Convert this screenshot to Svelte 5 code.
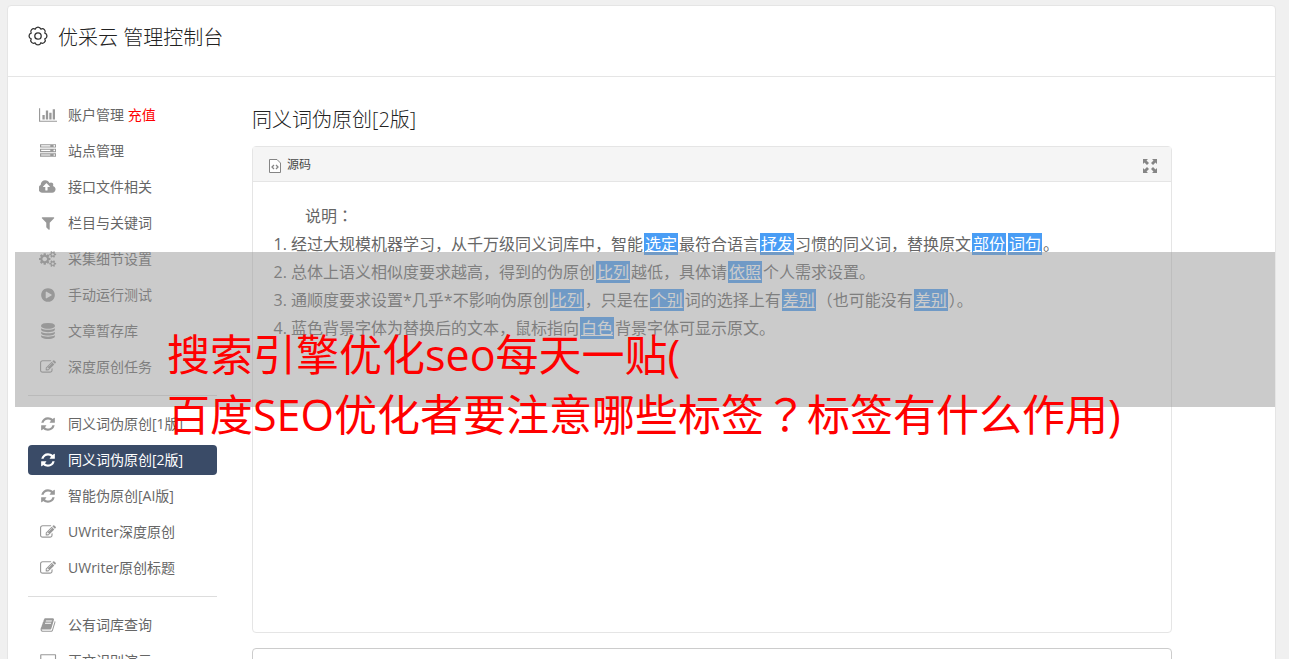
<script>
  const icons = {
    chart: { w: 2048, d: 'M640 896v512h-256v-512h256zm384-512v1024h-256v-1024h256zm1024 1152v128h-2048v-1536h128v1408h1920zm-640-896v768h-256v-768h256zm384-384v1152h-256v-1152h256z' },
    server: { w: 1792, d: 'M128 1408h1024v-128h-1024v128zm0-512h1024v-128h-1024v128zm1568 448q0-40-28-68t-68-28-68 28-28 68 28 68 68 28 68-28 28-68zm-1568-960h1024v-128h-1024v128zm1568 448q0-40-28-68t-68-28-68 28-28 68 28 68 68 28 68-28 28-68zm0-512q0-40-28-68t-68-28-68 28-28 68 28 68 68 28 68-28 28-68zm96 832v384h-1792v-384h1792zm0-512v384h-1792v-384h1792zm0-512v384h-1792v-384h1792z' },
    cloud: { w: 1920, d: 'M1216 864q0-14-9-23l-352-352q-9-9-23-9t-23 9l-351 351q-10 12-10 24 0 14 9 23t23 9h224v352q0 13 9.5 22.5t22.5 9.5h192q13 0 22.5-9.5t9.5-22.5v-352h224q13 0 22.5-9.5t9.5-22.5zm640 288q0 159-112.5 271.5t-271.5 112.5h-1088q-185 0-316.5-131.5t-131.5-316.5q0-130 70-240t188-165q-2-30-2-43 0-212 150-362t362-150q156 0 285.5 87t188.5 231q71-62 166-62 106 0 181 75t75 181q0 76-41 138 130 31 213.5 135.5t83.5 238.5z' },
    filter: { w: 1792, d: 'M1595 295q17 41-14 70l-493 493v742q0 42-39 59-13 5-25 5-27 0-45-19l-256-256q-19-19-19-45v-486l-493-493q-31-29-14-70 17-39 59-39h1280q42 0 59 39z' },
    cogs: { w: 1920, d: 'M896 896q0-106-75-181t-181-75-181 75-75 181 75 181 181 75 181-75 75-181zm768 512q0-52-38-90t-90-38-90 38-38 90q0 53 37.5 90.5t90.5 37.5 90.5-37.5 37.5-90.5zm0-1024q0-52-38-90t-90-38-90 38-38 90q0 53 37.5 90.5t90.5 37.5 90.5-37.5 37.5-90.5zm-384 421v185q0 10-7 19.5t-16 10.5l-155 24q-11 35-32 76 34 48 90 115 7 11 7 20 0 12-7 19-23 30-82.5 89.5t-78.5 59.5q-11 0-21-7l-115-90q-37 19-77 31-11 108-23 155-7 24-30 24h-186q-11 0-20-7.5t-10-17.5l-23-153q-34-10-75-31l-118 89q-7 7-20 7-11 0-21-8-144-133-144-160 0-9 7-19 10-14 41-53t47-61q-23-44-35-82l-152-24q-10-1-17-9.5t-7-19.5v-185q0-10 7-19.5t16-10.5l155-24q11-35 32-76-34-48-90-115-7-11-7-20 0-12 7-20 22-30 82-89t79-59q11 0 21 7l115 90q34-18 77-32 11-108 23-154 7-24 30-24h186q11 0 20 7.5t10 17.5l23 153q34 10 75 31l118-89q8-7 20-7 11 0 21 8 144 133 144 160 0 8-7 19-12 16-42 54t-45 60q23 48 34 82l152 23q10 2 17 10.5t7 19.5zm640 533v140q0 16-149 31-12 27-30 52 51 113 51 138 0 4-4 7-122 71-124 71-8 0-46-47t-52-68q-20 2-30 2t-30-2q-14 21-52 68t-46 47q-2 0-124-71-4-3-4-7 0-25 51-138-18-25-30-52-149-15-149-31v-140q0-16 149-31 13-29 30-52-51-113-51-138 0-4 4-7 4-2 35-20t59-34 30-16q8 0 46 46.5t52 67.5q20-2 30-2t30 2q51-71 92-112l6-2q4 0 124 70 4 3 4 7 0 25-51 138 17 23 30 52 149 15 149 31zm0-1024v140q0 16-149 31-12 27-30 52 51 113 51 138 0 4-4 7-122 71-124 71-8 0-46-47t-52-68q-20 2-30 2t-30-2q-14 21-52 68t-46 47q-2 0-124-71-4-3-4-7 0-25 51-138-18-25-30-52-149-15-149-31v-140q0-16 149-31 13-29 30-52-51-113-51-138 0-4 4-7 4-2 35-20t59-34 30-16q8 0 46 46.5t52 67.5q20-2 30-2t30 2q51-71 92-112l6-2q4 0 124 70 4 3 4 7 0 25-51 138 17 23 30 52 149 15 149 31z' },
    play: { w: 1792, d: 'M896 128q209 0 385.5 103t279.5 279.5 103 385.5-103 385.5-279.5 279.5-385.5 103-385.5-103-279.5-279.5-103-385.5 103-385.5 279.5-279.5 385.5-103zm384 823q32-18 32-55t-32-55l-544-320q-31-19-64-1-32 19-32 56v640q0 37 32 56 16 8 32 8 17 0 32-9z' },
    database: { w: 1792, d: 'M896 768q237 0 443-43t325-127v170q0 69-103 128t-280 93.5-385 34.5-385-34.5-280-93.5-103-128v-170q119 84 325 127t443 43zm0 768q237 0 443-43t325-127v170q0 69-103 128t-280 93.5-385 34.5-385-34.5-280-93.5-103-128v-170q119 84 325 127t443 43zm0-384q237 0 443-43t325-127v170q0 69-103 128t-280 93.5-385 34.5-385-34.5-280-93.5-103-128v-170q119 84 325 127t443 43zm0-1152q208 0 385 34.5t280 93.5 103 128v128q0 69-103 128t-280 93.5-385 34.5-385-34.5-280-93.5-103-128v-128q0-69 103-128t280-93.5 385-34.5z' },
    edit: { w: 1792, d: 'M888 1184l116-116-152-152-116 116v56h96v96h56zm440-720q-16-16-33 1l-350 350q-17 17-1 33t33-1l350-350q17-17 1-33zm80 594v190q0 119-84.5 203.5t-203.5 84.5h-832q-119 0-203.5-84.5t-84.5-203.5v-832q0-119 84.5-203.5t203.5-84.5h832q63 0 117 25 15 7 18 23 3 17-9 29l-49 49q-14 14-32 8-23-6-45-6h-832q-66 0-113 47t-47 113v832q0 66 47 113t113 47h832q66 0 113-47t47-113v-126q0-13 9-22l64-64q15-15 35-7t20 29zm-96-738l288 288-672 672h-288v-288zm444 132l-92 92-288-288 92-92q28-28 68-28t68 28l152 152q28 28 28 68t-28 68z' },
    refresh: { w: 1792, d: 'M1639 1056q0 5-1 7-64 268-268 434.5t-478 166.5q-146 0-282.5-55t-243.5-157l-129 129q-19 19-45 19t-45-19-19-45v-448q0-26 19-45t45-19h448q26 0 45 19t19 45-19 45l-137 137q71 66 161 102t187 36q134 0 250-65t186-179q11-17 53-117 8-23 30-23h192q13 0 22.5 9.5t9.5 22.5zm25-800v448q0 26-19 45t-45 19h-448q-26 0-45-19t-19-45 19-45l138-138q-148-137-349-137-134 0-250 65t-186 179q-11 17-53 117-8 23-30 23h-199q-13 0-22.5-9.5t-9.5-22.5v-7q65-268 270-434.5t480-166.5q146 0 284 55.5t245 156.5l130-129q19-19 45-19t45 19 19 45z' },
    book: { w: 1792, d: 'M1703 478q40 57 18 129l-275 906q-19 64-76.5 107.5t-122.5 43.5h-923q-77 0-148.5-53.5t-99.5-131.5q-24-67-2-127 0-4 3-27t4-37q1-8-3-21.5t-3-19.5q2-11 8-21t16.5-23.5 16.5-23.5q23-38 45-91.5t30-91.5q3-10 .5-30t-.5-28q3-11 17-28t17-23q21-36 42-92t25-90q1-9-2.5-32t.5-28q4-13 22-30.5t22-22.5q19-26 42.5-84.5t27.5-96.5q1-8-3-25.5t-2-26.5q2-8 9-18t18-23 17-21q8-12 16.5-30.5t15-35 16-36 19.5-32 26.5-23.5 36-11.5 47.5 5.5l-1 3q38-9 51-9h761q74 0 114 56t18 130l-274 906q-36 119-71.5 153.5t-128.5 34.5h-869q-27 0-38 15-11 16-1 43 24 70 144 70h923q29 0 56-15.5t35-41.5l300-987q7-22 5-57 38 15 59 43zm-1064 2q-4 13 2 22.5t20 9.5h608q13 0 25.5-9.5t16.5-22.5l21-64q4-13-2-22.5t-20-9.5h-608q-13 0-25.5 9.5t-16.5 22.5zm-83 256q-4 13 2 22.5t20 9.5h608q13 0 25.5-9.5t16.5-22.5l21-64q4-13-2-22.5t-20-9.5h-608q-13 0-25.5 9.5t-16.5 22.5z' },
    desktop: { w: 2048, d: 'M224 128h1600q90 0 90 90v1100q0 90-90 90h-1600q-90 0-90-90v-1100q0-90 90-90zm38 128v1024h1524v-1024zM640 1536h768v128h-768z' }
  };

  const groups = [
    [
      { icon: 'chart', label: '账户管理', extra: '充值' },
      { icon: 'server', label: '站点管理' },
      { icon: 'cloud', label: '接口文件相关' },
      { icon: 'filter', label: '栏目与关键词' },
      { icon: 'cogs', label: '采集细节设置' },
      { icon: 'play', label: '手动运行测试' },
      { icon: 'database', label: '文章暂存库' },
      { icon: 'edit', label: '深度原创任务' }
    ],
    [
      { icon: 'refresh', label: '同义词伪原创[1版]' },
      { icon: 'refresh', label: '同义词伪原创[2版]', active: true },
      { icon: 'refresh', label: '智能伪原创[AI版]' },
      { icon: 'edit', label: 'UWriter深度原创' },
      { icon: 'edit', label: 'UWriter原创标题' }
    ],
    [
      { icon: 'book', label: '公有词库查询' },
      { icon: 'desktop', label: '正文识别演示' }
    ]
  ];

  // Odd entries of each line are replaced words, drawn with a blue background.
  const notes = [
    ['经过大规模机器学习，从千万级同义词库中，智能', '选定', '最符合语言', '抒发', '习惯的同义词，替换原文', '部份', '', '词句', '。'],
    ['总体上语义相似度要求越高，得到的伪原创', '比列', '越低，具体请', '依照', '个人需求设置。'],
    ['通顺度要求设置*几乎*不影响伪原创', '比列', '，只是在', '个别', '词的选择上有', '差别', '（也可能没有', '差别', '）。'],
    ['蓝色背景字体为替换后的文本，鼠标指向', '白色', '背景字体可显示原文。']
  ];
</script>

<div class="page">
  <div class="card">
    <header>
      <svg class="gear" viewBox="0 0 20 20" aria-hidden="true">
        <path d="M16.800 7.200a2.900 2.900 0 0 1 0 5.600a2.900 2.900 0 0 1-4 4a2.900 2.900 0 0 1-5.600 0a2.900 2.900 0 0 1-4-4a2.900 2.900 0 0 1 0-5.600a2.900 2.900 0 0 1 4-4a2.900 2.900 0 0 1 5.600 0a2.900 2.900 0 0 1 4 4z" />
        <circle cx="10" cy="10" r="3.200" />
      </svg>
      <h1>优采云 管理控制台</h1>
    </header>

    <div class="body">
      <nav>
        {#each groups as group}
          <ul>
            {#each group as item}
              <li>
                <a href="#top" class:active={item.active}>
                  <span class="ico">
                    <svg width={(16 * icons[item.icon].w) / 1792} height="16" viewBox="0 0 {icons[item.icon].w} 1792" aria-hidden="true">
                      <path fill-rule={item.icon === 'desktop' ? 'evenodd' : 'nonzero'} d={icons[item.icon].d} />
                    </svg>
                  </span>
                  <span class="label">{item.label}{#if item.extra}{' '}<b>{item.extra}</b>{/if}</span>
                </a>
              </li>
            {/each}
          </ul>
        {/each}
      </nav>

      <main>
        <h2>同义词伪原创[2版]</h2>
        <section class="editor">
          <div class="toolbar">
            <button type="button">
              <svg width="12" height="14" viewBox="0 0 12 14" aria-hidden="true">
                <path d="M.5.5h7.500l3.500 3.500v9.500H.5z" fill="#fff" stroke="#858585" />
                <path d="M5 6L3 8l2 2M7 6l2 2-2 2" fill="none" stroke="#858585" stroke-width="1.300" />
              </svg>
              源码
            </button>
            <button type="button" aria-label="最大化">
              <svg width="14" height="14" viewBox="0 0 14 14" fill="#858585" aria-hidden="true">
                <path d="M0 0h5L3.500 1.500 6 4 4 6 1.500 3.500 0 5zM14 0v5l-1.500-1.500L10 6 8 4l2.500-2.500L9 0zM0 14V9l1.500 1.500L4 8l2 2-2.500 2.500L5 14zM14 14H9l1.500-1.500L8 10l2-2 2.500 2.500L14 9z" />
              </svg>
            </button>
          </div>
          <div class="content">
            <p>说明<span class="wide">：</span></p>
            <ol>
              {#each notes as parts}
                <li>{#each parts as part, i}{#if i % 2}<mark>{part}</mark>{:else}{part}{/if}{/each}</li>
              {/each}
            </ol>
          </div>
        </section>
        <textarea aria-label="结果"></textarea>
      </main>
    </div>
  </div>

  <div class="banner">
    <p>搜索引擎优化seo每天一贴(<br />百度SEO优化者要注意哪些标签<span class="wide">？</span>标签有什么作用)</p>
  </div>
</div>

<style>
  :global(body) {
    margin: 0;
    background: #f0f0f0;
  }
  .page {
    position: relative;
    box-sizing: border-box;
    height: 100vh;
    overflow: hidden;
    padding: 5px 13px 0 7px;
    font-family: "Open Sans", "Noto Sans CJK SC", sans-serif;
    font-size: 14px;
    color: #666;
  }
  .card {
    background: #fff;
    border: 1px solid #e5e5e5;
    border-radius: 4px;
  }
  header {
    display: flex;
    align-items: center;
    gap: 10px;
    height: 60px;
    padding: 0 20px 10px;
    border-bottom: 1px solid #e5e5e5;
  }
  .gear {
    width: 20px;
    height: 20px;
    fill: none;
    stroke: #333;
    stroke-width: 1.3;
    stroke-linejoin: round;
  }
  h1,
  h2 {
    margin: 0;
    font-size: 20px;
    font-weight: 300;
    line-height: 28px;
    color: #222;
  }
  h1 {
    padding-top: 3px;
  }
  .body {
    display: grid;
    grid-template-columns: 189px 1fr;
    gap: 35px;
    padding: 23px 103px 20px 20px;
  }
  ul {
    display: grid;
    gap: 6px;
    margin: 0;
    padding: 0;
    list-style: none;
  }
  ul + ul {
    margin-top: 13px;
    padding-top: 13px;
    border-top: 1px solid #ddd;
  }
  nav a {
    display: flex;
    align-items: center;
    gap: 10px;
    height: 30px;
    padding-left: 10px;
    border-radius: 4px;
    color: #666;
    text-decoration: none;
    white-space: nowrap;
  }
  nav a.active {
    background: #3a4b67;
    color: #fff;
  }
  .label {
    padding-bottom: 2px;
  }
  .ico {
    display: flex;
    justify-content: center;
    width: 20px;
    color: #999;
  }
  .active .ico {
    color: #fff;
  }
  .ico svg {
    fill: currentColor;
  }
  nav b {
    font-weight: 400;
    color: #f00;
  }
  main {
    display: flex;
    flex-direction: column;
    padding-top: 6px;
  }
  .editor {
    margin: 12px 0 15px;
    border: 1px solid #e5e5e5;
    border-radius: 4px;
  }
  .toolbar {
    display: flex;
    justify-content: space-between;
    align-items: center;
    height: 34px;
    padding: 0 14px 0 16px;
    background: #f5f5f5;
    border-bottom: 1px solid #e5e5e5;
  }
  .toolbar svg {
    margin-top: 4px;
  }
  button {
    display: flex;
    align-items: center;
    gap: 6px;
    padding: 0;
    border: 0;
    background: none;
    font: inherit;
    font-size: 12px;
    color: #484848;
  }
  .content {
    min-height: 410px;
    padding: 20px;
    font-size: 16px;
    line-height: 28px;
    color: #666;
  }
  .content p {
    margin: 0;
    padding-left: 32px;
  }
  .wide {
    font-family: "Noto Sans CJK JP", sans-serif;
    line-height: 1;
  }
  ol {
    margin: 0;
    padding-left: 18px;
  }
  mark {
    margin: 0 1px;
    padding: 0 1px;
    background: #499df5;
    color: #fff;
    text-decoration: underline;
  }
  textarea {
    box-sizing: border-box;
    width: 100%;
    height: 120px;
    border: 1px solid #ccc;
    border-radius: 4px;
    resize: none;
  }
  .banner {
    position: absolute;
    top: 252px;
    left: 15px;
    right: 14px;
    height: 155px;
    background: rgba(151, 151, 151, 0.5);
  }
  .banner p {
    margin: 0;
    padding: 73px 0 0 152px;
    font-size: 43px;
    line-height: 60px;
    color: #f00;
    white-space: nowrap;
  }
</style>
